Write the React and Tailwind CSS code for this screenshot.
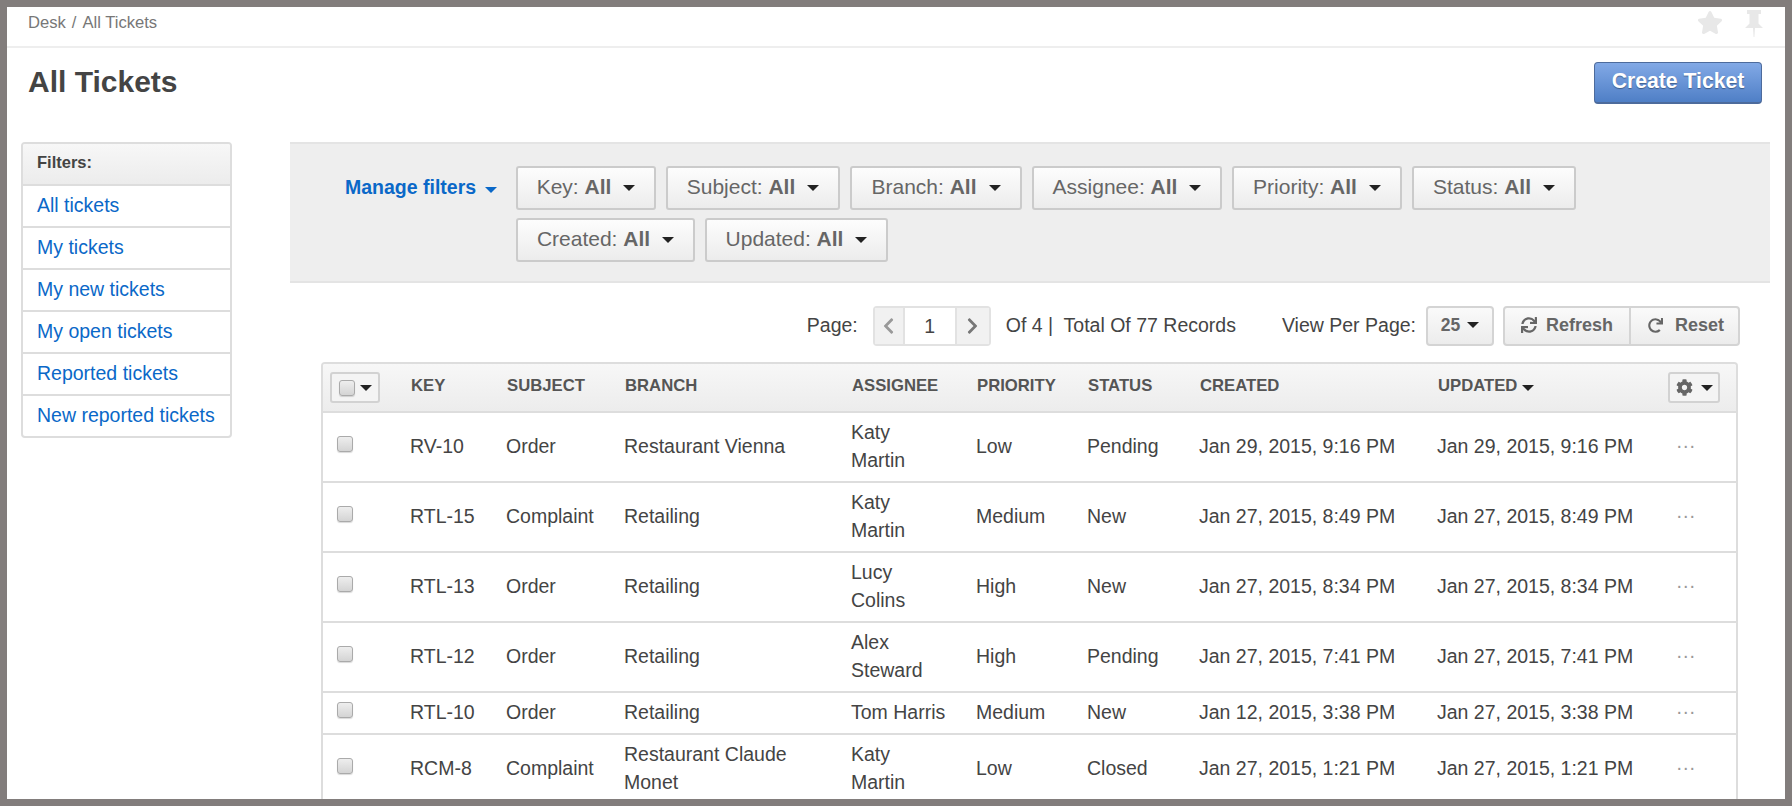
import React from 'react';
import { FaStar, FaSync, FaRedo, FaCog, FaChevronLeft, FaChevronRight } from 'react-icons/fa';

const Caret = ({ className = 'border-t-[#222]' }) => (
  <span className={`inline-block w-0 h-0 border-x-[6px] border-x-transparent border-t-[6px] ${className}`} />
);

const filtersTop = [
  ['Key', 'w-[140px]'], ['Subject', 'w-[174px]'], ['Branch', 'w-[172px]'],
  ['Assignee', 'w-[190px]'], ['Priority', 'w-[170px]'], ['Status', 'w-[164px]'],
];
const filtersBottom = [['Created', 'w-[179px]'], ['Updated', 'w-[183px]']];

const FilterBtn = ({ label, w }) => (
  <button className={`${w} h-[44px] shrink-0 flex items-center justify-center gap-[12px] rounded-[3px] border-2 border-[#cbcbcb] bg-gradient-to-b from-[#fdfdfd] to-[#ececec] text-[21px] text-[#666]`}>
    <span className="pb-[2px]">{label}: <b className="font-bold">All</b></span>
    <Caret />
  </button>
);

const sideLinks = ['All tickets', 'My tickets', 'My new tickets', 'My open tickets', 'Reported tickets', 'New reported tickets'];

const cols = ['w-[80px]', 'w-[96px]', 'w-[118px]', 'w-[227px]', 'w-[125px]', 'w-[111px]', 'w-[112px]', 'w-[238px]', 'w-[231px]', 'w-[75px]'];

const rows = [
  ['RV-10', 'Order', ['Restaurant Vienna'], ['Katy', 'Martin'], 'Low', 'Pending', 'Jan 29, 2015, 9:16 PM', 'Jan 29, 2015, 9:16 PM', 'h-[70px]'],
  ['RTL-15', 'Complaint', ['Retailing'], ['Katy', 'Martin'], 'Medium', 'New', 'Jan 27, 2015, 8:49 PM', 'Jan 27, 2015, 8:49 PM', 'h-[70px]'],
  ['RTL-13', 'Order', ['Retailing'], ['Lucy', 'Colins'], 'High', 'New', 'Jan 27, 2015, 8:34 PM', 'Jan 27, 2015, 8:34 PM', 'h-[70px]'],
  ['RTL-12', 'Order', ['Retailing'], ['Alex', 'Steward'], 'High', 'Pending', 'Jan 27, 2015, 7:41 PM', 'Jan 27, 2015, 7:41 PM', 'h-[70px]'],
  ['RTL-10', 'Order', ['Retailing'], ['Tom Harris'], 'Medium', 'New', 'Jan 12, 2015, 3:38 PM', 'Jan 27, 2015, 3:38 PM', 'h-[42px]'],
  ['RCM-8', 'Complaint', ['Restaurant Claude', 'Monet'], ['Katy', 'Martin'], 'Low', 'Closed', 'Jan 27, 2015, 1:21 PM', 'Jan 27, 2015, 1:21 PM', 'h-[70px]'],
];

const Check = ({ className = '' }) => (
  <span className={`block w-[16px] h-[16px] rounded-[3px] border border-[#aaa] bg-gradient-to-b from-[#eee] to-[#d4d4d4] shadow-[0_1px_1px_rgba(0,0,0,0.15)] ${className}`} />
);

const Lines = ({ items }) => items.map((t, i) => <div key={i}>{t}</div>);

const Pin = () => (
  <svg viewBox="0 0 18 27" className="w-[18px] h-[27px]" fill="currentColor">
    <path d="M2 0h14v4h-2.5v9.5L18 18H10l-.6 9h-.8L8 18H0l4.5-4.5V4H2z" />
  </svg>
);

const td = 'border-b-2 border-[#ddd] pl-[7px] pb-[2px]';

export default function App() {
  return (
    <div className="h-[806px] w-full border-[7px] border-[#827d7c] bg-white overflow-hidden font-['Liberation_Sans',Arial,sans-serif] text-[19.5px] leading-[28px] text-[#444]">
      <div className="h-[41px] border-b-2 border-[#eee] flex items-center justify-between pl-[21px] pr-[22px]">
        <div className="text-[16.6px] text-[#777] pb-[7px] whitespace-pre">Desk<span className="mx-[6px]">/</span>All Tickets</div>
        <div className="flex items-center gap-[22px] text-[#e8e8e8] pb-[6px]">
          <FaStar className="w-[26px] h-[25px] mb-[2px]" />
          <Pin />
        </div>
      </div>

      <div className="h-[94px] flex justify-between pl-[21px] pr-[23px]">
        <h1 className="text-[30px] leading-[36px] font-bold text-[#444] pt-[16px]">All Tickets</h1>
        <button className="mt-[14px] w-[168px] h-[42px] pb-[4px] rounded-[4px] border border-[#4d6b9c] border-b-2 bg-gradient-to-b from-[#82a9e6] to-[#4f7fc6] text-white text-[21.2px] font-bold [text-shadow:0_1px_1px_rgba(0,0,0,0.35)]">
          Create Ticket
        </button>
      </div>

      <div className="flex items-start pl-[14px]">
        <aside className="w-[211px] shrink-0 rounded-[4px] border-2 border-[#ddd] overflow-hidden">
          <div className="h-[40px] flex items-center pl-[14px] pb-[4px] bg-gradient-to-b from-[#f7f7f7] to-[#ececec] text-[16.5px] font-bold text-[#444]">Filters:</div>
          {sideLinks.map((l) => (
            <div key={l} className="h-[42px] border-t-2 border-[#ddd] flex items-center pl-[14px] pb-[2px] text-[#0a68c8]">{l}</div>
          ))}
        </aside>

        <main className="ml-[58px] w-[1480px] shrink-0">
          <section className="h-[141px] bg-[#eeeeee] border-t-2 border-b-2 border-[#e4e4e4] flex pt-[22px]">
            <div className="w-[226px] shrink-0 pl-[55px] h-[44px] text-[#0a68c8] font-bold flex items-center gap-[9px] whitespace-nowrap">
              <span className="pb-[2px]">Manage filters</span>
              <Caret className="border-t-[#0a68c8] mt-[3px]" />
            </div>
            <div className="flex flex-col gap-[8px]">
              <div className="flex gap-[10px]">{filtersTop.map(([l, w]) => <FilterBtn key={l} label={l} w={w} />)}</div>
              <div className="flex gap-[10px]">{filtersBottom.map(([l, w]) => <FilterBtn key={l} label={l} w={w} />)}</div>
            </div>
          </section>

          <div className="h-[40px] mt-[23px] flex items-center justify-end pr-[30px]">
            <span className="pb-[3px]">Page:</span>
            <div className="ml-[15px] h-[40px] w-[118px] flex rounded-[4px] border-2 border-[#e2e2e2] text-[#999]">
              <span className="w-[30px] flex items-center justify-center bg-[#f1f1f1] border-r-2 border-[#e2e2e2]"><FaChevronLeft className="w-[15px] h-[18px]" /></span>
              <span className="flex-1 flex items-center justify-center text-[#444] bg-white">1</span>
              <span className="w-[34px] flex items-center justify-center bg-[#f1f1f1] border-l-2 border-[#e2e2e2] text-[#777]"><FaChevronRight className="w-[15px] h-[18px]" /></span>
            </div>
            <span className="ml-[15px] pb-[3px]">Of 4 |&nbsp; Total Of 77 Records</span>
            <span className="ml-[46px] pb-[3px]">View Per Page:</span>
            <button className="ml-[10px] w-[68px] h-[40px] pb-[2px] rounded-[4px] border-2 border-[#d4d4d4] bg-gradient-to-b from-[#fafafa] to-[#ececec] flex items-center justify-center gap-[7px] text-[17.5px] font-bold text-[#666]">
              25 <Caret />
            </button>
            <div className="ml-[9px] h-[40px] flex rounded-[4px] border-2 border-[#d4d4d4] bg-gradient-to-b from-[#fafafa] to-[#ececec] text-[18px] font-bold text-[#666]">
              <button className="w-[126px] pb-[2px] flex items-center justify-center gap-[9px] border-r-2 border-[#d4d4d4]"><FaSync className="w-[16px] h-[16px]" />Refresh</button>
              <button className="w-[107px] pb-[2px] pl-[3px] flex items-center justify-center gap-[12px]"><FaRedo className="w-[15px] h-[15px]" />Reset</button>
            </div>
          </div>

          <div className="mt-[16px] ml-[31px] w-[1417px] rounded-t-[4px] border-x-2 border-t-2 border-[#ddd] overflow-hidden">
            <table className="w-[1413px] table-fixed">
              <colgroup>{cols.map((c, i) => <col key={i} className={c} />)}</colgroup>
              <thead>
                <tr className="h-[48px] bg-gradient-to-b from-[#f7f7f7] to-[#ececec] text-left text-[16.7px] font-bold text-[#555] uppercase">
                  <th className="border-b-2 border-[#ddd] pl-[7px]">
                    <span className="w-[50px] h-[31px] flex items-center justify-center gap-[5px] rounded-[3px] border-2 border-[#d2d2d2] bg-[#f4f4f4]">
                      <Check /><Caret />
                    </span>
                  </th>
                  {['Key', 'Subject', 'Branch', 'Assignee', 'Priority', 'Status', 'Created'].map((h) => (
                    <th key={h} className="border-b-2 border-[#ddd] pl-[8px] pb-[3px] font-bold">{h}</th>
                  ))}
                  <th className="border-b-2 border-[#ddd] pl-[8px] pb-[3px] font-bold whitespace-nowrap">Updated <Caret /></th>
                  <th className="border-b-2 border-[#ddd] pl-[7px]">
                    <span className="w-[52px] h-[31px] flex items-center justify-center gap-[8px] rounded-[3px] border-2 border-[#d2d2d2] bg-[#f4f4f4] text-[#666]">
                      <FaCog className="w-[17px] h-[17px]" /><Caret />
                    </span>
                  </th>
                </tr>
              </thead>
              <tbody>
                {rows.map((r) => (
                  <tr key={r[0]} className={r[8]}>
                    <td className="border-b-2 border-[#ddd] pl-[14px]"><Check className="mb-[7px]" /></td>
                    <td className={td}>{r[0]}</td>
                    <td className={td}>{r[1]}</td>
                    <td className={td}><Lines items={r[2]} /></td>
                    <td className={td}><Lines items={r[3]} /></td>
                    <td className={td}>{r[4]}</td>
                    <td className={td}>{r[5]}</td>
                    <td className={td}>{r[6]}</td>
                    <td className={td}>{r[7]}</td>
                    <td className="border-b-2 border-[#ddd] pl-[15px] text-[#999] pb-[5px]">···</td>
                  </tr>
                ))}
              </tbody>
            </table>
          </div>
        </main>
      </div>
    </div>
  );
}
